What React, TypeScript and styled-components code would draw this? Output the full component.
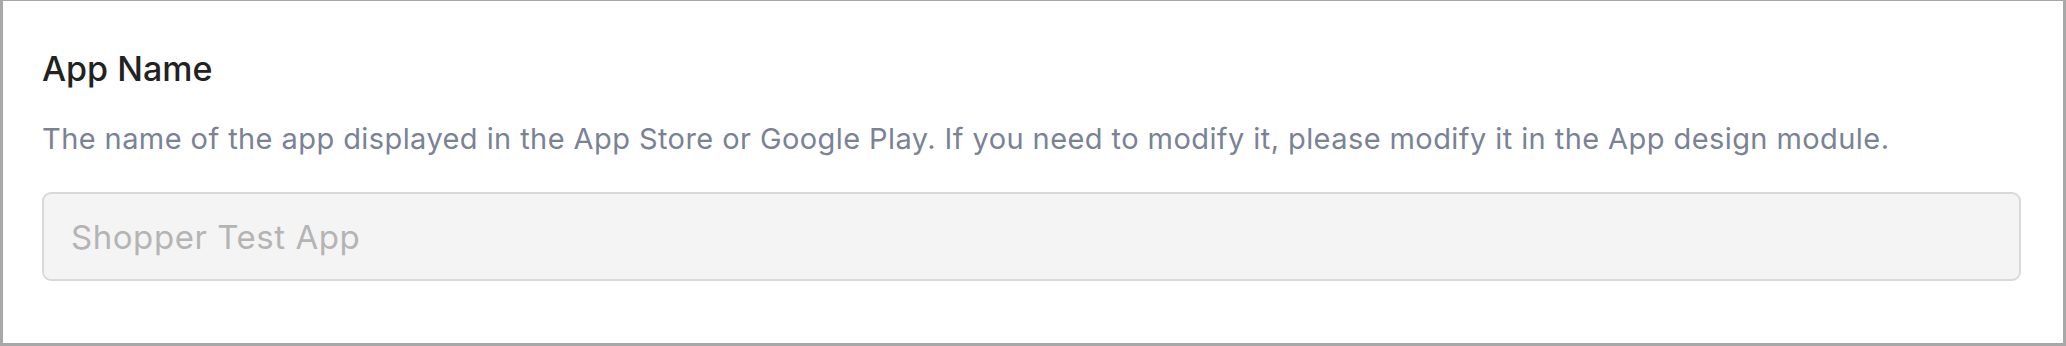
import React from 'react';
import styled, { createGlobalStyle } from 'styled-components';

const GlobalStyle = createGlobalStyle`
  html, body {
    margin: 0;
    padding: 0;
    background: #ffffff;
  }
  body {
    font-family: Inter, "Noto Sans", "Liberation Sans", sans-serif;
    -webkit-font-smoothing: antialiased;
  }
`;

const Panel = styled.section`
  box-sizing: border-box;
  width: 2066px;
  height: 346px;
  border: 3px solid #a8a8a8;
  border-top-width: 1px;
  padding: 48px 42px 0 39px;
  display: flex;
  flex-direction: column;
  background: #ffffff;
`;

const Title = styled.h2`
  margin: 0;
  font-size: 34px;
  line-height: 40px;
  font-weight: 500;
  color: #222222;
`;

const Hint = styled.p`
  margin: 32px 0 0;
  font-size: 29px;
  line-height: 36px;
  font-weight: 400;
  letter-spacing: 0.42px;
  color: #7a8296;
`;

const Field = styled.input`
  box-sizing: border-box;
  margin-top: 35px;
  width: 100%;
  height: 89px;
  padding: 0 27px;
  border: 2px solid #d9d9d9;
  border-radius: 9px;
  background: #f4f4f4;
  font-family: inherit;
  font-size: 33px;
  letter-spacing: 0.55px;
  color: #b4b4b4;
  outline: none;

  &::placeholder {
    color: #b4b4b4;
    opacity: 1;
  }
`;

const App: React.FC = () => {
  return (
    <>
      <GlobalStyle />
      <Panel>
        <Title>App Name</Title>
        <Hint>
          The name of the app displayed in the App Store or Google Play. If you need to modify it, please modify it in the App design module.
        </Hint>
        <Field placeholder="Shopper Test App" disabled />
      </Panel>
    </>
  );
};

export default App;
